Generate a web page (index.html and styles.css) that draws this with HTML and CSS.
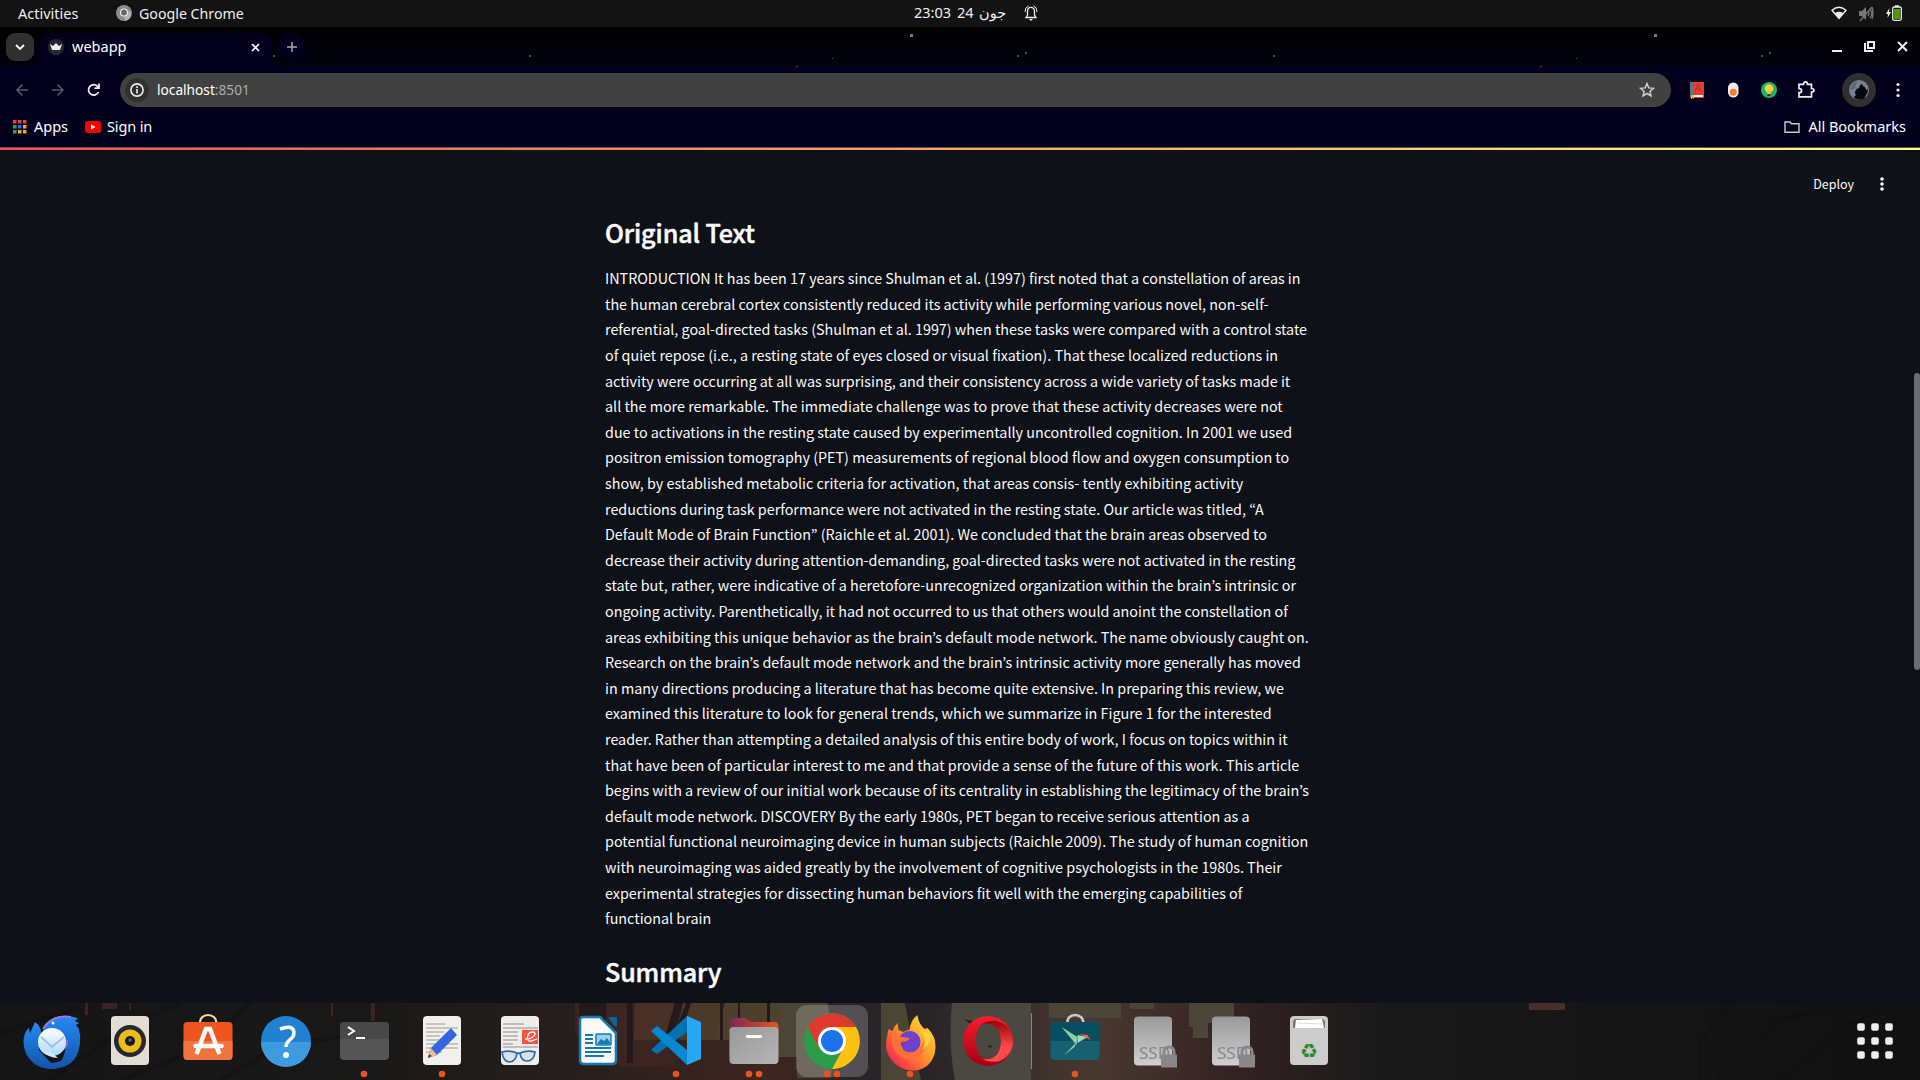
FILE: index.html
```html
<!DOCTYPE html>
<html lang="en"><head><meta charset="utf-8"><title>webapp</title><link rel="stylesheet" href="styles.css"></head>
<body>
<header class="topbar">
  <span class="activities">Activities</span>
  <svg class="appicon" viewBox="0 0 16 16"><circle cx="8" cy="8" r="8" fill="#8c8c8c"/><path d="M8 8 14 6Q17 13 9 16Z" fill="#b5b5b5"/><circle cx="8" cy="7.5" r="3.5" fill="#666" stroke="#eee" stroke-width="1.2"/></svg>
  <span class="appname">Google Chrome</span>
  <div class="clock"><span class="time">23:03</span><span class="day">24</span><span class="month">جون</span>
    <svg width="14" height="16" viewBox="0 0 14 16" fill="none" stroke="#eee"><path d="M2 12.5h10L10.5 10V6.500C10.500 1 3.500 1 3.500 6.500V10z" stroke-width="1.300"/><path d="M1 7Q1 2 4.500 1M13 7Q13 2 9.500 1"/><path d="M5 14h4l-2 2z" fill="#eee" stroke="none"/></svg></div>
  <div class="tray">
    <svg width="16" height="14" viewBox="0 0 16 14"><path d="M1 4.300Q8-2 15 4.300L8 12.500z" fill="none" stroke="#eee" stroke-width="1.400"/><path d="M4 7Q8 4.500 12 7L8 13z" fill="#eee"/></svg>
    <svg width="15" height="15" viewBox="0 0 15 15" fill="none" stroke="#777" stroke-width="1.300"><path d="M0 5h3l4-4v13L3 10H0z" fill="#777" stroke="none"/><path d="M9 5q2 2.500 0 5M11 3q3.500 4.500 0 9M13 1q2 6 0 12M1 15 13 1"/></svg>
    <svg width="16" height="16" viewBox="0 0 16 16"><path d="M3.500 3 0 9h2L1.500 13 5 7H3z" fill="#eee"/><rect x="6.700" y="2" width="8.600" height="13.300" rx="1.500" fill="none" stroke="#eee" stroke-width="1.300"/><path d="M9 .3h4V2H9z" fill="#eee"/><path d="M8 4h6v10H8z" fill="#4e9a06"/></svg>
  </div>
</header>
<div class="tabs">
  <div class="tabsearch"><svg width="10" height="7" viewBox="0 0 10 7" fill="none" stroke="#fff" stroke-width="1.800"><path d="m1 1 4 4 4-4"/></svg></div>
  <div class="tab"><svg width="16" height="16" viewBox="0 0 16 16"><circle cx="8" cy="8" r="8" fill="#262730"/><path d="m2 5 3 2 3-3 3 3 3-2-2 6H4z" fill="#eee"/></svg><span>webapp</span><svg width="9" height="9" viewBox="0 0 9 9" stroke="#fff" stroke-width="1.700"><path d="m1 1 7 7M8 1 1 8"/></svg></div>
  <div class="newtab"><svg width="10" height="10" viewBox="0 0 10 10" stroke="#aaa" stroke-width="1.500"><path d="M5 0v10M0 5h10"/></svg></div>
  <svg class="stars" width="1920" height="40" viewBox="0 0 1920 40"><g fill="#77776f"><path d="M910 7h3v3h-3zM1654 7h3v3h-3z"/></g><g fill="#4b4b58"><path d="M529 28h2v2h-2zM273 28h2v2h-2zM1017 28h2v2h-2zM1025 25h2v2h-2zM1273 28h2v2h-2zM1761 28h2v2h-2zM1769 25h2v2h-2zM832 31h1v1h-1zM796 39h2v1h-2zM1576 31h1v1h-1zM1540 39h2v1h-2z"/></g></svg>
  <svg class="winctl" width="76" height="12" viewBox="0 0 76 12" stroke="#eee" fill="none" stroke-width="2"><path d="M0 10h10M36 1h6v6h-6zM33 2v8h8"/><path d="m66 1 9 9M75 1l-9 9"/></svg>
</div>
<div class="toolbar">
  <svg class="nav" width="84" height="14" viewBox="0 0 84 14" fill="none" stroke-width="1.600"><path stroke="#555466" d="M12 7H1M6.500 1.500 1 7l5.500 5.500M36 7h11M41.500 1.500 47 7l-5.500 5.500"/><path stroke="#eee" stroke-width="1.800" d="M82.500 9A5.200 5.200 0 1 1 81.500 3.300L83 5M83 .5V5.200h-4.500"/></svg>
  <div class="url"><span class="info"><svg width="14" height="14" viewBox="0 0 14 14"><circle cx="7" cy="7" r="6.100" fill="none" stroke="#eee" stroke-width="1.600"/><path d="M6.200 6h1.600v4.500H6.200zM6.200 3.300h1.600v1.600H6.200z" fill="#eee"/></svg></span><span class="host">localhost<i>:8501</i></span><svg class="star" width="16" height="16" viewBox="0 0 16 16" fill="none" stroke="#ccc" stroke-width="1.500"><path d="m8 1.600 1.800 4.300 4.700.4-3.600 3.100 1.100 4.600L8 11.500 4 14l1.100-4.600-3.600-3.100 4.700-.4z"/></svg></div>
  <svg class="ext" width="230" height="34" viewBox="0 0 230 34"><path d="M0 9h14v16H0z" fill="#e53e30"/><path d="M0 9h3v16H0z" fill="#64717a"/><path d="M3 22h10v2H3z" fill="#eee"/><path d="M1 22h3v4l-1.500-1L1 26z" fill="#fb0"/><path d="m5 19 3-8 3 8M6 16h4" stroke="#b92f25" fill="none"/>
  <rect x="38" y="9.500" width="10.500" height="15" rx="5.200" fill="#eee"/><circle cx="43.200" cy="19.200" r="3.500" fill="#f47b30"/>
  <circle cx="79" cy="17" r="8" fill="#18b76b"/><circle cx="79" cy="15.500" r="4.300" fill="#ffd43b"/><path d="M77 18h4v3h-4z" fill="#fb3"/><path d="M77.500 21h3v2h-3z" fill="#333"/>
  <path d="M109 11.300h4.500q0-2.500 2-2.500t2 2.500h4v4.200q2.500 0 2.500 1.800t-2.500 1.800v4.800H109v-4.200q2.600 0 2.600-2t-2.600-2z" fill="none" stroke="#eee" stroke-width="1.700"/>
  <circle cx="169" cy="17" r="17" fill="#303030"/><circle cx="169" cy="17" r="10" fill="#79808d"/><path d="M164 25q0-2 2-3l-1-2q0-4 4-5l1-3 2-1 1 2q3 1 3 4l2-1q0 4-2 6l-2 4q-5 2-10-1z" fill="#07080e"/><path d="M160 17q1-7 7-9l-2 8z" fill="#626978"/>
  <g fill="#eee"><circle cx="208" cy="11.500" r="1.600"/><circle cx="208" cy="17" r="1.600"/><circle cx="208" cy="22.500" r="1.600"/></g></svg>
</div>
<div class="bookmarks">
  <svg width="14" height="14" viewBox="0 0 14 14"><path d="M0 0h3.500v3.500H0zM5 0h3.500v3.500H5zM10 0h3.500v3.500H10z" fill="#ea4335"/><path d="M0 5h3.500v3.500H0zM0 10h3.500v3.500H0z" fill="#34a060"/><path d="M5 5h3.500v3.500H5z" fill="#1a73e8"/><path d="M10 5h3.500v3.500H10zM5 10h3.500v3.500H5zM10 10h3.500v3.500H10z" fill="#fbab05"/></svg><span class="apps">Apps</span>
  <svg width="16" height="12" viewBox="0 0 16 12"><rect width="16" height="12" rx="3" fill="#f00"/><path d="M6 3.500v5L10.500 6z" fill="#fff"/></svg><span class="signin">Sign in</span>
  <svg class="folder" width="16" height="12" viewBox="0 0 16 12" fill="none" stroke="#ccc" stroke-width="1.400"><path d="M1 1h5l1.500 1.700H15v8.600H1z"/></svg><span class="all">All Bookmarks</span>
</div>
<main class="page">
  <div class="decoration"></div>
  <div class="deploy"><span>Deploy</span><svg width="4" height="14" viewBox="0 0 4 14" fill="#fafafa"><circle cx="2" cy="2" r="1.800"/><circle cx="2" cy="7" r="1.800"/><circle cx="2" cy="12" r="1.800"/></svg></div>
  <article>
    <h2>Original Text</h2>
    <p>INTRODUCTION It has been 17 years since Shulman et al. (1997) first noted that a constellation of areas in<br>the human cerebral cortex consistently reduced its activity while performing various novel, non-self-<br>referential, goal-directed tasks (Shulman et al. 1997) when these tasks were compared with a control state<br>of quiet repose (i.e., a resting state of eyes closed or visual fixation). That these localized reductions in<br>activity were occurring at all was surprising, and their consistency across a wide variety of tasks made it<br>all the more remarkable. The immediate challenge was to prove that these activity decreases were not<br>due to activations in the resting state caused by experimentally uncontrolled cognition. In 2001 we used<br>positron emission tomography (PET) measurements of regional blood flow and oxygen consumption to<br>show, by established metabolic criteria for activation, that areas consis- tently exhibiting activity<br>reductions during task performance were not activated in the resting state. Our article was titled, “A<br>Default Mode of Brain Function” (Raichle et al. 2001). We concluded that the brain areas observed to<br>decrease their activity during attention-demanding, goal-directed tasks were not activated in the resting<br>state but, rather, were indicative of a heretofore-unrecognized organization within the brain’s intrinsic or<br>ongoing activity. Parenthetically, it had not occurred to us that others would anoint the constellation of<br>areas exhibiting this unique behavior as the brain’s default mode network. The name obviously caught on.<br>Research on the brain’s default mode network and the brain’s intrinsic activity more generally has moved<br>in many directions producing a literature that has become quite extensive. In preparing this review, we<br>examined this literature to look for general trends, which we summarize in Figure 1 for the interested<br>reader. Rather than attempting a detailed analysis of this entire body of work, I focus on topics within it<br>that have been of particular interest to me and that provide a sense of the future of this work. This article<br>begins with a review of our initial work because of its centrality in establishing the legitimacy of the brain’s<br>default mode network. DISCOVERY By the early 1980s, PET began to receive serious attention as a<br>potential functional neuroimaging device in human subjects (Raichle 2009). The study of human cognition<br>with neuroimaging was aided greatly by the involvement of cognitive psychologists in the 1980s. Their<br>experimental strategies for dissecting human behaviors fit well with the emerging capabilities of<br>functional brain</p>
    <h2>Summary</h2>
  </article>
  <div class="scrollbar"></div>
</main>
<footer class="dock">
<svg width="1920" height="77" viewBox="0 0 1920 77">
<defs>
<linearGradient id="bg"><stop offset="0" stop-color="#151515"/><stop offset=".2" stop-color="#1a1918"/><stop offset=".29" stop-color="#261e1c"/><stop offset=".4" stop-color="#3e2521"/><stop offset=".48" stop-color="#282326"/><stop offset=".57" stop-color="#48382f"/><stop offset=".64" stop-color="#352323"/><stop offset=".72" stop-color="#191919"/><stop offset="1" stop-color="#111"/></linearGradient>
<linearGradient id="blue" x2="0" y2="1"><stop stop-color="#258bf0"/><stop offset="1" stop-color="#1254ad"/></linearGradient>
<linearGradient id="mail" x2="0" y2="1"><stop stop-color="#fff"/><stop offset="1" stop-color="#a9d8ff"/></linearGradient>
<linearGradient id="grey" x2="0" y2="1"><stop stop-color="#999"/><stop offset="1" stop-color="#d0d0d0"/></linearGradient>
<linearGradient id="files" x2="1" y2="1"><stop stop-color="#999"/><stop offset="1" stop-color="#b5b5b5"/></linearGradient>
<linearGradient id="fold"><stop stop-color="#7c2855"/><stop offset="1" stop-color="#e65420"/></linearGradient>
<linearGradient id="fire" x1="1" y1="0" x2="0" y2="1"><stop stop-color="#fff044"/><stop offset=".45" stop-color="#ff9a28"/><stop offset=".75" stop-color="#ff483f"/><stop offset="1" stop-color="#d70b83"/></linearGradient>
<linearGradient id="opera" x2="0" y2="1"><stop stop-color="#ff1b2d"/><stop offset="1" stop-color="#a30014"/></linearGradient>
<linearGradient id="opera2" x2="0" y2="1"><stop stop-color="#9c0000"/><stop offset=".65" stop-color="#ff4b4b"/></linearGradient>
</defs>
<rect width="1920" height="77" fill="url(#bg)"/>
<g fill="none" stroke="#101010" stroke-width="5" opacity=".4"><path d="M0 30 80 5M50 77 130 22 180 0M120 77l80-30 50-47M220 77l60-34 80-12M1700 77V40l30-40M1716 77l60-60 50-10M1780 77l60-50 40-20"/></g>
<g fill="#3a2522"><path d="M85 0h3v12h-3zM102 0h15v6h-15zM129 0h2v7h-2zM331 0h2v13h-2zM371 0h4v18h-4z"/><path d="M575 0h100v64h-55l-45-34z"/><path fill="#4a3128" d="M635 0h39l-7 37h-33z"/><path fill="#4b3a2a" d="M683 0h40v37h-48z"/><path fill="#4c402c" d="M725 0h44v54h-40v-17h-14z"/><path fill="#4b4330" d="M770 0h58l5 54h-63z"/><path fill="#24191a" d="M579 0h27v60h-27zM627 0h6v60h-6zM675 0h8l-12 37h-7zM686 0h5l-12 37h-7zM720 0h3v37h-3zM738 0h2v38h-2zM767 0h3v54h-3z"/><path fill="#4b4536" d="M780 0h46l8 25-3 50h-34V54h-17zM881 0h24q7 40 16 77h-40z"/><path fill="#282427" d="M828 0h53v77h-42q0-40-11-77z"/><path fill="#4b4637" d="M1049 0h72v15h-72zM1130 0h24v6h-24zM1189 0h45v20h-26v15h-15V24h-4z"/><path fill="#482d28" d="M1529 0h36v7h-36z"/></g>
<path fill="#4a4840" d="M952 0h79v77h-76q-7-35-3-77z"/><path d="M964 16l8 2 6 6-8-3zM987 42l6 1-3 2z" fill="#26221f"/>
<g transform="translate(24 11)"><path d="M11 8q8 5 6 18l-2 10 12 13q20-1 23-23l6-7C59 53 28 62 11 50-3 40-3 20 5 14l1 5z" fill="url(#blue)"/><path d="M19 17Q27 0 43 2q7 1 11 2l-3 3 4 2-3 2 3 4q5 37-23 39Q51 32 32 15z" fill="url(#blue)"/><path d="M19 15Q28 0 47 3" fill="none" stroke="#9a75f0" stroke-width="2"/><path d="M43 26q2 9-13 13" fill="none" stroke="#806be0" stroke-width="2"/><circle cx="28" cy="28" r="14" fill="url(#mail)"/><path d="m17 23 11 10 12-10" fill="none" stroke="#aabfd1" stroke-width="2"/><path d="M18 36q6 8 16 8l-7-6z" fill="#cceaff"/><circle cx="29" cy="9" r="1.500" fill="#fff"/></g>
<g transform="translate(111 13)"><rect width="38" height="49" rx="4" fill="#e2ded3"/><circle cx="19" cy="25" r="16" fill="#252733"/><circle cx="19" cy="25" r="11.500" fill="#edbd17"/><circle cx="19" cy="25" r="5" fill="#171920"/><circle cx="19" cy="24" r="1.800" fill="#666"/></g>
<g transform="translate(183.500 19)"><path d="M16.500 2C15-10 34-10 33 2" fill="none" stroke="#f6d8a4" stroke-width="2.200"/><rect width="49" height="38" rx="4" fill="#ee5520"/><path d="M0 19h49v15q0 4-4 4H4q-4 0-4-4z" fill="#f0743f"/><path d="m13 32 9.500-25h4L36 32" fill="none" stroke="#fff" stroke-width="4.500"/><path d="M12 24h26" stroke="#fff" stroke-width="4.500" stroke-linecap="round"/></g>
<g transform="translate(261 13)"><circle cx="25" cy="25" r="25" fill="#2182d2"/><path d="M0 26a25 25 0 0 0 50 0z" fill="#3d9ce0"/><path d="M19 13q14-5 14 4c0 7-8 6-8 14" fill="none" stroke="#fff" stroke-width="3.500"/><circle cx="25" cy="39" r="3" fill="#fff"/></g>
<g transform="translate(340 19)"><rect width="49" height="38" rx="4" fill="#555"/><path d="M0 17V4q0-4 4-4h41q4 0 4 4v13z" fill="#484848"/><path d="m8 5 6 4-6 4M16 16h9" fill="none" stroke="#fff" stroke-width="2"/></g>
<g transform="translate(423 13)"><rect width="38" height="49" rx="4" fill="#f0f0ef"/><path d="M3 8h19M3 12h32M3 16h18M3 20h14M3 24h18M3 28h32M3 32h32M3 36h16" stroke="#bbb5a8" stroke-width="1.500"/><path d="m5 42 3-10L28 12l6 7-20 20z" fill="#3467df"/><path d="m5 42 3-10 6 7z" fill="#f5bd83"/><path d="m5 42 1-4 3 2z" fill="#444"/></g>
<g transform="translate(501 13)"><rect width="38" height="49" rx="4" fill="#eee"/><path d="M2 8h21M2 12h35M2 16h15M2 20h15M2 24h15M2 28h10M2 31h35" stroke="#b2ada2" stroke-width="1.500"/><path d="M21 14h16v14H21z" fill="#fb5145"/><path d="M24 23c8 1 13-7 8-7-6 0-8 10-2 9l6-2" fill="none" stroke="#fff" stroke-width="1.300"/><path d="M1 36q8-2 15 1-1 9-8 9Q2 45 1 36zm18 1q7-3 15-1-1 9-8 9-6 0-7-8zM16 38q2-2 3 0" fill="#c4d5e488" stroke="#2769a8" stroke-width="1.700"/></g>
<g transform="translate(579 13)"><path d="M4 1h17l16 16v27q0 4-4 4H5q-4 0-4-4V4q0-3 3-3z" fill="#f9f9f9" stroke="#1679ae" stroke-width="2.500"/><path d="M29 1h9v10q-3-1-5-4z" fill="#0c669c"/><path d="M6 19h8M6 23h8M6 27h8M6 32h26M6 36h26M6 40h19" stroke="#1679ae" stroke-width="2"/><rect x="17" y="18" width="15" height="11" rx="1" fill="#96d1ef" stroke="#1679ae" stroke-width="1.500"/><path d="m18 28 4-5 3 2 3-3 4 6z" fill="#1679ae"/></g>
<g transform="translate(651 13)"><path d="m0 34 36-34v16L6 38z" fill="#0570b2"/><path d="m0 15 6-5 30 24v15z" fill="#0788d1"/><path d="m36 0 14 6v37l-14 6z" fill="#27a8f0"/></g>
<g transform="translate(729.500 15)"><path d="M0 12V4q0-4 4-4h12l6 4h23q4 0 4 5v8H0z" fill="url(#fold)"/><rect y="9" width="49" height="37" rx="4" fill="url(#files)"/><path d="M18 18.500h13" stroke="#fff" stroke-width="3.200" stroke-linecap="round"/></g>
<rect x="796" y="2" width="72" height="72" rx="11" fill="#fff" opacity=".2"/>
<g transform="translate(804 10)"><circle cx="28" cy="28" r="28" fill="#2a9d4b"/><path d="M4 14a28 28 0 0 1 48 0H28L14 34z" fill="#df382d"/><path d="M28 14h24a28 28 0 0 1-24 42l12-22z" fill="#fbc012"/><circle cx="28" cy="28" r="14" fill="#fff"/><circle cx="28" cy="28" r="11" fill="#1a73e8"/></g>
<g transform="translate(884.500 12)"><path d="M3 19 4 14l4 2q1-4 5-8l1 7 5 2q3-2 6-2 1-10 8-15 1 9 7 14l3-1q8 8 8 18c0 32-41 32-49 4Q1 27 3 19z" fill="url(#fire)"/><circle cx="25" cy="27" r="11" fill="#6e42cf"/><path d="M6 20q11 2 19 3-1 4-9 4 1 12 13 10 9-3 10-13 5 18-13 20Q7 43 6 20z" fill="#ff7138"/><path d="M34 15q10 5 4 20 9-7 8-16" fill="#ffd23c"/></g>
<g transform="translate(963 13)"><path d="M25 0a25 25 0 1 0 0 50 25 25 0 0 0 0-50zm0 6c9 0 13 10 13 19s-4 18-13 18-12-10-12-18S16 6 25 6z" fill="url(#opera)" fill-rule="evenodd"/><path d="M17 9C32-1 50 9 50 25S34 52 18 42c10 4 20-2 20-17S27 5 17 9z" fill="url(#opera2)"/></g>
<path d="M1031.500 10v56" stroke="#888"/>
<g transform="translate(1050.500 19)"><path d="M17 2C15-10 34-10 33 2" fill="none" stroke="#c9cbcd" stroke-width="2.500"/><rect width="49" height="38" rx="4" fill="#074f60"/><path d="M0 19h49v15q0 4-4 4H4q-4 0-4-4z" fill="#17606f"/><path d="m11 5 16 10-1 8z" fill="#8bd0a6"/><path d="m26 20-2 5-10 8z" fill="#8bd0a6"/><path d="M27 13l10 2-10 6z" fill="#a8d5b6"/><path d="m29 12 8 1 3 5z" fill="#f26442"/></g>
<g class="disk" transform="translate(1134 13.500)"><rect width="38" height="49" rx="4" fill="url(#grey)"/><text x="5" y="42">SSD</text><path d="M30 39v-4c0-6 10-6 10 0v4" fill="none" stroke="#888" stroke-width="3"/><path d="M27 38h16v13H27z" fill="#888"/></g>
<g class="disk" transform="translate(1212 13.500)"><rect width="38" height="49" rx="4" fill="url(#grey)"/><text x="5" y="42">SSD</text><path d="M30 39v-4c0-6 10-6 10 0v4" fill="none" stroke="#888" stroke-width="3"/><path d="M27 38h16v13H27z" fill="#888"/></g>
<g transform="translate(1290 13)"><rect width="38" height="49" rx="4" fill="#ccc"/><path d="M3 12V5l2-2h28l2 2v7z" fill="#777"/><path d="M5 12 6 4l26-1 2 9z" fill="#fff"/><path d="M7 7l25 1" stroke="#ddd"/><text x="19" y="42" class="recycle">♻</text></g>
<g fill="#e95420"><circle cx="364" cy="71" r="3.300"/><circle cx="442" cy="71" r="3.300"/><circle cx="676" cy="71" r="3.300"/><circle cx="749" cy="71" r="3.300"/><circle cx="759" cy="71" r="3.300"/><circle cx="827" cy="71" r="3.300"/><circle cx="837" cy="71" r="3.300"/><circle cx="910" cy="71" r="3.300"/><circle cx="1075" cy="71" r="3.300"/></g>
<g fill="#eee"><rect x="1857.200" y="20.200" width="7.600" height="7.600" rx="2"/><rect x="1871.200" y="20.200" width="7.600" height="7.600" rx="2"/><rect x="1885.200" y="20.200" width="7.600" height="7.600" rx="2"/><rect x="1857.200" y="34.200" width="7.600" height="7.600" rx="2"/><rect x="1871.200" y="34.200" width="7.600" height="7.600" rx="2"/><rect x="1885.200" y="34.200" width="7.600" height="7.600" rx="2"/><rect x="1857.200" y="48.200" width="7.600" height="7.600" rx="2"/><rect x="1871.200" y="48.200" width="7.600" height="7.600" rx="2"/><rect x="1885.200" y="48.200" width="7.600" height="7.600" rx="2"/></g>
</svg>
</footer>
</body></html>
```
FILE: styles.css
```css
*{box-sizing:border-box}
body{margin:0;width:1920px;height:1080px;overflow:hidden;background:#0e1117;color:#fff;font-family:"Noto Sans","DejaVu Sans",sans-serif;font-size:14.500px;display:flex;flex-direction:column}
svg{display:block;flex:none}
span{white-space:nowrap}
.topbar{height:27px;background:#131313;display:flex;align-items:center;position:relative;padding:0 0 1px 18px;color:#eee;font-size:14.500px}
.activities{width:98px}
.appicon{width:16px;height:16px;margin-right:7px}
.appname{font-size:14.200px}
.clock{position:absolute;left:914px;top:0;height:26px;display:flex;align-items:center}
.clock span{margin-top:-2px}
.time{width:43px}.day{width:21px}.month{width:44px;padding-left:1px}
.clock svg{margin-left:2px}
.tray{margin-left:auto;display:flex;align-items:center;gap:12px;padding-right:18px}
.tabs{height:40px;background:linear-gradient(#000,#02020f);display:flex;position:relative;padding-left:6px}
.tabsearch{width:28px;height:28px;margin:6px 6px 0 0;border-radius:9px;background:#303030;display:grid;place-items:center}
.tab{width:232px;height:34px;margin-top:6px;padding:0 12px 6px 8px;border-radius:10px 10px 0 0;background:#03001e;display:flex;align-items:center;position:relative}
.tab:before,.tab:after{content:"";position:absolute;bottom:0;width:10px;height:10px}
.tab:before{left:-10px;background:radial-gradient(circle at 0 0,transparent 10px,#03001e 10px)}
.tab:after{right:-10px;background:radial-gradient(circle at 100% 0,transparent 10px,#03001e 10px)}
.tab span{margin:-2px auto 0 8px}
.newtab{width:28px;height:28px;margin:6px;border-radius:50%;background:#03001e;display:grid;place-items:center}
.stars{position:absolute;left:0;top:0}
.winctl{margin:14px 12px 0 auto}
.toolbar{height:46px;background:#03001e;display:flex;align-items:center;padding-left:16px}
.nav{margin-right:20px}
.url{flex:0 0 1551px;height:34px;border-radius:17px;background:#414141;display:flex;align-items:center;padding:0 16px 0 5px}
.info{width:24px;height:24px;border-radius:50%;background:#303030;display:grid;place-items:center;margin-right:8px}
.host{font-size:13.700px;margin-top:-1px}.host i{font-style:normal;color:#aaa}
.star{margin-left:auto}
.ext{margin-left:19px}
.bookmarks{height:34px;background:#03001e;display:flex;align-items:center;padding:0 14px 6px 13px}
.bookmarks span{padding-bottom:2px}
.apps{margin:0 17px 0 7px}.signin{margin-left:6px;letter-spacing:-.15px}
.folder{margin:0 8px 0 auto}
.page{height:856px;position:relative;border-top:1px solid #55535a;font-family:"Noto Sans CJK JP","Source Sans Pro",sans-serif;color:#fafafa}
.decoration{height:2px;background:linear-gradient(90deg,#ff4b4b,#fffd80)}
.deploy{height:65px;padding-top:2px;display:flex;align-items:center;justify-content:flex-end;gap:26px;padding-right:36px;font-size:12.500px}
article{margin-left:605px;width:710px}
h2{font-size:25.100px;line-height:34px;font-weight:500;letter-spacing:-.1px;-webkit-text-stroke:.5px #fafafa;margin:0;white-space:nowrap}
p{font-size:14.336px;line-height:25.600px;margin:16.250px 0 23.750px;white-space:nowrap}
.scrollbar{position:absolute;right:0;top:225px;width:6px;height:297px;background:#6b6c70;border-radius:3px}
.dock{height:77px}
.disk text{font:17px "Noto Sans",sans-serif;fill:#888}
.recycle{font:20px "DejaVu Sans",sans-serif;fill:#278b1e;text-anchor:middle}
```
